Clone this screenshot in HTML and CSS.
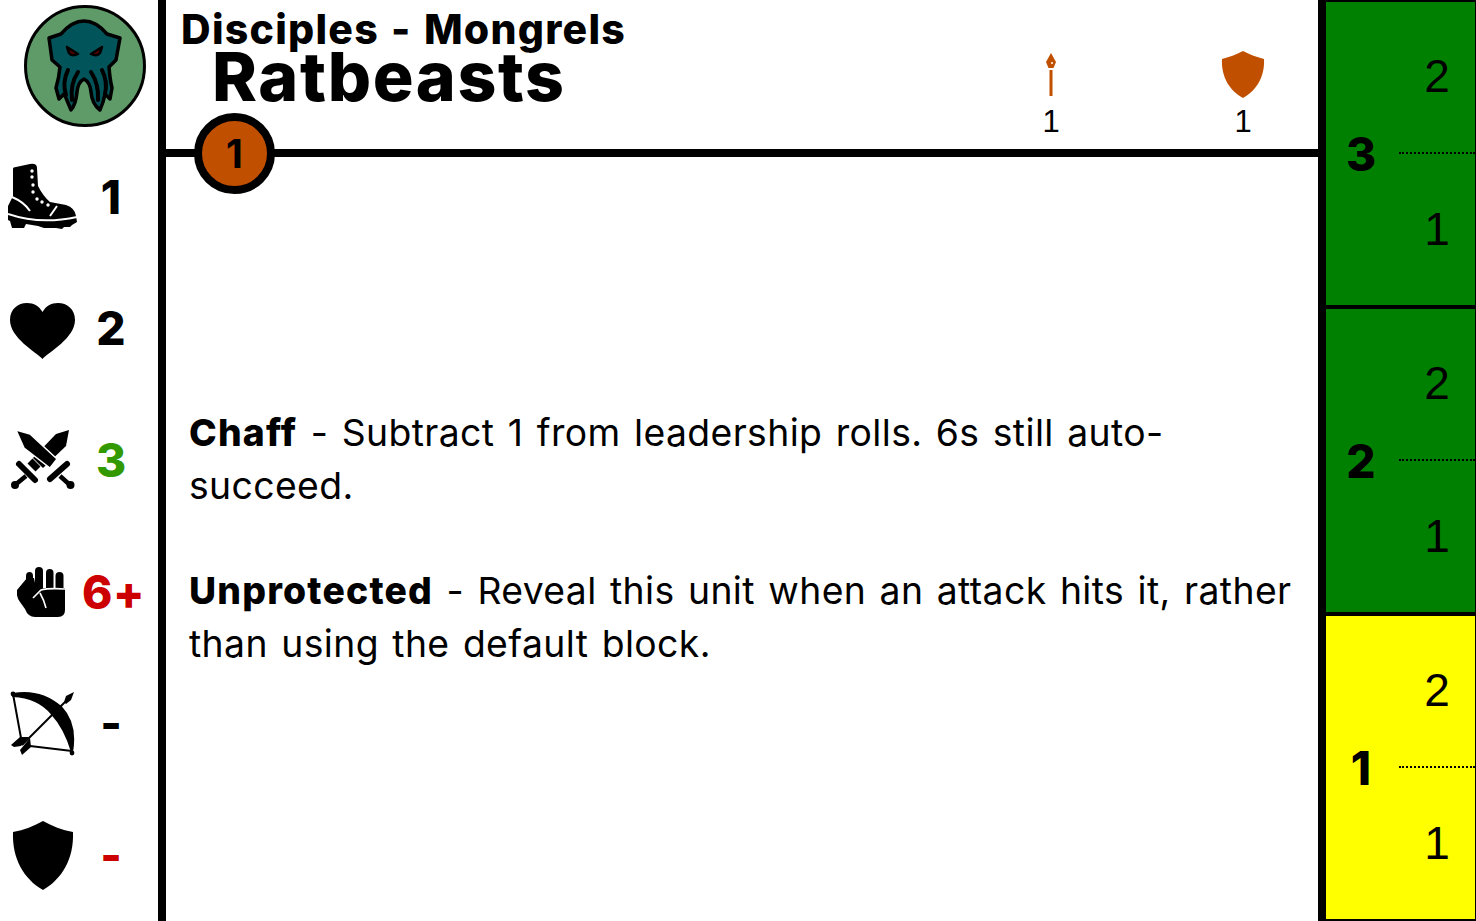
FILE: index.html
```html
<!DOCTYPE html>
<html lang="en">

<head>
    <meta charset="UTF-8">
    <title>Ratbeasts</title>
    <link rel="stylesheet" href="styles.css">
</head>

<body>
    <div class="card">
        <div class="stats">
            <div class="logo">
                <svg viewBox="24 5 122 122" width="122" height="122">
                    <circle cx="85" cy="66" r="59.5" fill="#5f9a69" stroke="#000" stroke-width="3" />
                    <path d="M49 38 L61 34 Q72 21 84 21 Q96 21 107 34 L120 38 L116 60 L109 67 Q110 80 112 88 L110 99 L105 94 L103 102 L100 110 Q92 104 91 92 Q90 82 84 79 Q78 82 77 92 Q76 104 71 110 L66 98 L64 94 L59 99 L56 88 Q59 78 60 67 L52 60 Z" fill="#00545a" stroke="#000" stroke-width="3.5" stroke-linejoin="round" />
                    <path d="M68 70 Q62 82 66 95 M102 70 Q108 82 105 94 M78 72 Q70 84 72 100 M91 72 Q99 84 98 100" fill="none" stroke="#000" stroke-width="4" stroke-linecap="round" />
                    <path d="M67 47 L78 54 Q72 57 69 53 Z M102 47 L91 54 Q97 57 100 53 Z" fill="#5c0000" stroke="#000" stroke-width="2.5" stroke-linejoin="round" />
                </svg>
            </div>
            <div class="stat">
                <svg class="icon icon-boot" viewBox="8 164 70 67" width="70" height="67">
                    <path d="M13 170 Q13 168 16 168 L30 165 Q37 164 37 169 L38 187 Q43 197 50 203 L66 206 Q75 209 76 217 L77 223 L72 226 L70 228 L64 228 L62 230 L56 229 L50 229 L44 229 L38 227 L26 225 L24 229 L12 229 L10 222 L8 221 L8 207 L13 197 Z" fill="#000" />
                    <path d="M8 215 Q40 226 77 218 M12 198 Q24 203 30 212 M50 217 L57 207" fill="none" stroke="#fff" stroke-width="2" />
                    <g fill="#fff">
                        <circle cx="32" cy="172" r="1.7" />
                        <circle cx="32" cy="178" r="1.7" />
                        <circle cx="33" cy="186" r="1.7" />
                        <circle cx="33" cy="193" r="1.7" />
                        <circle cx="37" cy="200" r="1.7" />
                        <circle cx="42" cy="203" r="1.7" />
                        <circle cx="48" cy="206" r="1.7" />
                    </g>
                </svg>
                <span class="val">1</span>
            </div>
            <div class="stat">
                <svg class="icon icon-heart" viewBox="0 0 66 57" width="66" height="57">
                    <path d="M32.5 56 C26 49 0 35 0 17 C0 6 8 0 17 0 C24 0 29 3 32.5 9 C36 3 41 0 48 0 C57 0 65 6 65 17 C65 35 39 49 32.5 56 Z" fill="#000" />
                </svg>
                <span class="val">2</span>
            </div>
            <div class="stat">
                <svg class="icon icon-swords" viewBox="10 430 66 62" width="66" height="62">
                    <path d="M69 431 L56 435 L33 459 L43 469 L66 447 Z" fill="#000" />
                    <path d="M16 431 L30 435 L57 460 L50 469 L24 449 Z" fill="#000" stroke="#fff" stroke-width="1.5" />
                    <path d="M30 462 L38 470" stroke="#000" stroke-width="7" />
                    <path d="M50 480 L67 465 M19 465 L35 481" stroke="#000" stroke-width="6" stroke-linecap="round" />
                    <path d="M60 477 L70 486 M26 477 L15 486" stroke="#000" stroke-width="4.5" />
                    <circle cx="70.5" cy="486" r="4" fill="#000" />
                    <circle cx="15" cy="486" r="4" fill="#000" />
                </svg>
                <span class="val green">3</span>
            </div>
            <div class="stat">
                <svg class="icon icon-fist" viewBox="17 566 49 52" width="49" height="52">
                    <path d="M26 590 L26 576 Q26 572 29.5 572 Q33 572 33 576 L33 590 Z" fill="#000" />
                    <rect x="35" y="567" width="8" height="26" rx="4" fill="#000" />
                    <rect x="46" y="569" width="7.5" height="24" rx="3.7" fill="#000" />
                    <rect x="55.5" y="572" width="8" height="22" rx="4" fill="#000" />
                    <path d="M27 578 L17 590 Q16 597 20 602 L25 609 Q28 617 35 617 L58 617 Q65 617 65 610 L65 588 L36 588 L34 578 Z" fill="#000" />
                    <path d="M65 589 Q48 588 41 590 L33 598 M40 593 Q44 600 46 608" fill="none" stroke="#fff" stroke-width="1.6" />
                </svg>
                <span class="val red wide">6+</span>
            </div>
            <div class="stat">
                <svg class="icon icon-bow" viewBox="10 690 66 66" width="66" height="66">
                    <path d="M13 694 Q40 689 61 707 Q77 724 72 752 Q65 728 52 714 Q38 697 13 696 Z" fill="#000" stroke="#000" stroke-width="2" stroke-linejoin="round" />
                    <path d="M13 694 L21 738 M30 746 L72 751" stroke="#000" stroke-width="2" fill="none" />
                    <path d="M22 745 L65 702" stroke="#000" stroke-width="2" />
                    <path d="M64 702 L66 696 L74 692 L71 700 L66 704 Z" fill="#000" />
                    <path d="M11 745 L20 737 L29 737 L21 746 L14 747 Z M20 750 L30 738 L31 747 L22 755 Z" fill="#000" />
                    <circle cx="13" cy="694" r="2.4" fill="#000" />
                    <circle cx="72" cy="753" r="2.4" fill="#000" />
                </svg>
                <span class="val">-</span>
            </div>
            <div class="stat">
                <svg class="icon icon-shield" viewBox="0 0 62 70" width="62" height="70">
                    <path d="M31 0 C40 5 50 9 61 11 C62 38 50 58 31 69 C12 58 0 38 1 11 C12 9 22 5 31 0 Z" fill="#000" />
                </svg>
                <span class="val red">-</span>
            </div>
        </div>

        <div class="main">
            <header class="head">
                <div class="names">
                    <div class="faction">Disciples - Mongrels</div>
                    <h1 class="title">Ratbeasts</h1>
                </div>
                <div class="gear gear-spear">
                    <svg viewBox="0 0 12 44" width="12" height="44">
                        <path d="M6 0 L11 9 L8.5 15 L3.5 15 L1 9 Z" fill="#c14f00" />
                        <path d="M6 17 L6 43" stroke="#c14f00" stroke-width="3" />
                        <circle cx="7" cy="10" r="1" fill="#fff" />
                    </svg>
                    <span>1</span>
                </div>
                <div class="gear gear-shield">
                    <svg viewBox="0 0 44 48" width="44" height="48">
                        <path d="M22 0 C28 3 35 6 43 8 C44 26 35 40 22 47 C9 40 0 26 1 8 C9 6 16 3 22 0 Z" fill="#c14f00" />
                    </svg>
                    <span>1</span>
                </div>
                <div class="cost">1</div>
            </header>
            <div class="rules">
                <div>
                    <b>Chaff</b> - Subtract 1 from leadership rolls. 6s still auto-succeed.<br><br>
                    <b>Unprotected</b> - Reveal this unit when an attack hits it, rather than using the default block.
                </div>
            </div>
        </div>

        <div class="track">
            <div class="seg green-bg">
                <div class="seg-num">3</div>
                <div class="seg-vals">
                    <div>2</div>
                    <div>1</div>
                </div>
            </div>
            <div class="seg green-bg">
                <div class="seg-num">2</div>
                <div class="seg-vals">
                    <div>2</div>
                    <div>1</div>
                </div>
            </div>
            <div class="seg yellow-bg">
                <div class="seg-num">1</div>
                <div class="seg-vals">
                    <div>2</div>
                    <div>1</div>
                </div>
            </div>
        </div>
    </div>
</body>

</html>
```

FILE: styles.css
```css
html,
body {
    margin: 0;
    padding: 0;
    height: 100%;
    background-color: #fff;
    color: #000;
    font-family: Inter, "Liberation Sans", sans-serif;
}

.card {
    display: flex;
    height: 921px;
    overflow: hidden;
}

.stats {
    width: 158px;
    flex: none;
    border-right: 8px solid #000;
    display: flex;
    flex-direction: column;
}

.logo {
    height: 131px;
    display: flex;
    justify-content: flex-end;
    align-items: flex-start;
    padding: 5px 12px 0 0;
    box-sizing: border-box;
}

.stat {
    height: 132px;
    display: flex;
    align-items: center;
    position: relative;
}

.icon {
    flex: none;
}

.icon-boot {
    margin-left: 8px;
}

.icon-heart {
    margin: 6px 0 0 10px;
}

.icon-swords {
    margin-left: 10px;
}

.icon-fist {
    margin-left: 17px;
}

.icon-bow {
    margin-left: 10px;
}

.icon-shield {
    margin: 2px 0 0 12px;
}

.val {
    position: absolute;
    left: 82px;
    width: 58px;
    text-align: center;
    font-size: 46px;
    font-weight: 800;
}

.val.wide {
    left: 82px;
    width: 60px;
    letter-spacing: 0.5px;
}

.green {
    color: #339900;
}

.red {
    color: #cc0000;
}

.main {
    flex: 1;
    display: flex;
    flex-direction: column;
    min-width: 0;
}

.head {
    height: 149px;
    flex: none;
    border-bottom: 8px solid #000;
    position: relative;
    display: flex;
}

.names {
    flex: 1;
    padding-left: 15px;
}

.faction {
    font-size: 41px;
    font-weight: 800;
    line-height: 46px;
    margin-top: 6px;
    letter-spacing: 1.25px;
    word-spacing: 2px;
}

.title {
    font-size: 68px;
    font-weight: 800;
    line-height: 56px;
    margin: -4px 0 0 31px;
    letter-spacing: 1.6px;
}

.gear {
    width: 60px;
    display: flex;
    flex-direction: column;
    align-items: center;
    justify-content: flex-end;
    font-family: "Liberation Sans", sans-serif;
    font-size: 31px;
    height: 139px;
    position: relative;
    left: 1px;
}

.gear svg {
    display: block;
    margin-bottom: 6px;
}

.gear-spear svg {
    margin-bottom: 8px;
}

.gear span {
    line-height: 34px;
}

.gear-spear {
    margin-right: 132px;
}

.gear-shield {
    margin-right: 46px;
}

.cost {
    position: absolute;
    left: 28px;
    top: 113px;
    width: 65px;
    height: 65px;
    border: 8px solid #000;
    border-radius: 50%;
    background-color: #c14f00;
    text-align: center;
    line-height: 65px;
    font-size: 39px;
    font-weight: 700;
}

.rules {
    flex: 1;
    display: flex;
    flex-direction: column;
    justify-content: center;
    padding: 0 20px 0 23px;
    font-size: 37.3px;
    line-height: 52.8px;
    letter-spacing: 0.4px;
    word-spacing: 2.5px;
}

.rules b {
    font-weight: 800;
    letter-spacing: 1.2px;
}

.track {
    width: 149px;
    flex: none;
    border-left: 8px solid #000;
    border-right: 1px solid #000;
    display: flex;
    flex-direction: column;
}

.seg {
    flex: 1;
    display: flex;
    border-top: 2px solid #000;
    border-bottom: 2px solid #000;
}

.green-bg {
    background-color: #008000;
}

.yellow-bg {
    background-color: #ffff00;
}

.seg-num {
    width: 70px;
    display: flex;
    align-items: center;
    justify-content: center;
    font-size: 46px;
    font-weight: 800;
}

.seg-vals {
    flex: 1;
    padding-left: 3px;
    display: flex;
    flex-direction: column;
    font-family: "Liberation Sans", sans-serif;
    font-size: 46px;
}

.seg-vals div {
    height: 50%;
    box-sizing: border-box;
    display: flex;
    align-items: center;
    justify-content: center;
}

.seg-vals div:first-child {
    border-bottom: 2px dotted #000;
    padding-bottom: 2px;
}
```
